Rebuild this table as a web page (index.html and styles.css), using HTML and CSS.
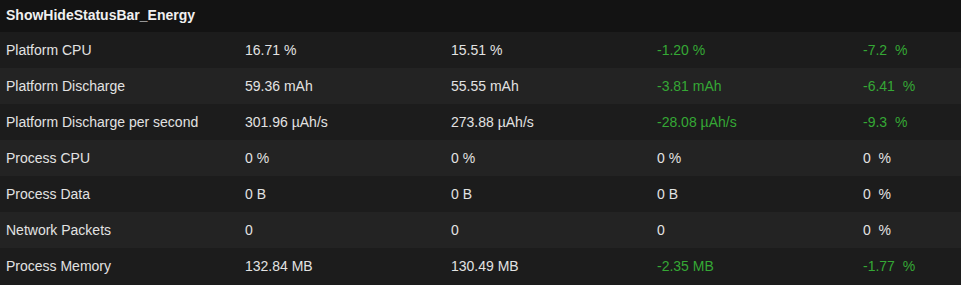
FILE: index.html
```html
<!DOCTYPE html>
<html lang="en">
<head>
    <meta charset="UTF-8">
    <title>ShowHideStatusBar_Energy</title>
    <link rel="stylesheet" href="styles.css">
</head>
<body>
    <div class="report">
        <div class="title">ShowHideStatusBar_Energy</div>
        <div class="row">
            <span>Platform CPU</span><span>16.71 %</span><span>15.51 %</span>
            <span class="good">-1.20 %</span><span class="good">-7.2&nbsp; %</span>
        </div>
        <div class="row">
            <span>Platform Discharge</span><span>59.36 mAh</span><span>55.55 mAh</span>
            <span class="good">-3.81 mAh</span><span class="good">-6.41&nbsp; %</span>
        </div>
        <div class="row">
            <span>Platform Discharge per second</span><span>301.96 µAh/s</span><span>273.88 µAh/s</span>
            <span class="good">-28.08 µAh/s</span><span class="good">-9.3&nbsp; %</span>
        </div>
        <div class="row">
            <span>Process CPU</span><span>0 %</span><span>0 %</span>
            <span>0 %</span><span>0&nbsp; %</span>
        </div>
        <div class="row">
            <span>Process Data</span><span>0 B</span><span>0 B</span>
            <span>0 B</span><span>0&nbsp; %</span>
        </div>
        <div class="row">
            <span>Network Packets</span><span>0</span><span>0</span>
            <span>0</span><span>0&nbsp; %</span>
        </div>
        <div class="row">
            <span>Process Memory</span><span>132.84 MB</span><span>130.49 MB</span>
            <span class="good">-2.35 MB</span><span class="good">-1.77&nbsp; %</span>
        </div>
    </div>
</body>
</html>
```

FILE: styles.css
```css
body { margin: 0; background: #1b1b1b; color: #e2e2e2; font-family: "Liberation Sans", Arial, sans-serif; font-size: 14px; }
.report { display: flex; flex-direction: column; }
.title { height: 32px; line-height: 30px; padding: 0 6px; background: #131313; font-weight: bold; color: #f0f0f0; }
.row { display: grid; grid-template-columns: 239px 206px 206px 206px 1fr; height: 36px; align-items: center; background: #1c1c1c; }
.row:nth-child(odd) { background: #232323; }
.row span { padding-left: 6px; white-space: pre; }
.good { color: #35a835; }
```
